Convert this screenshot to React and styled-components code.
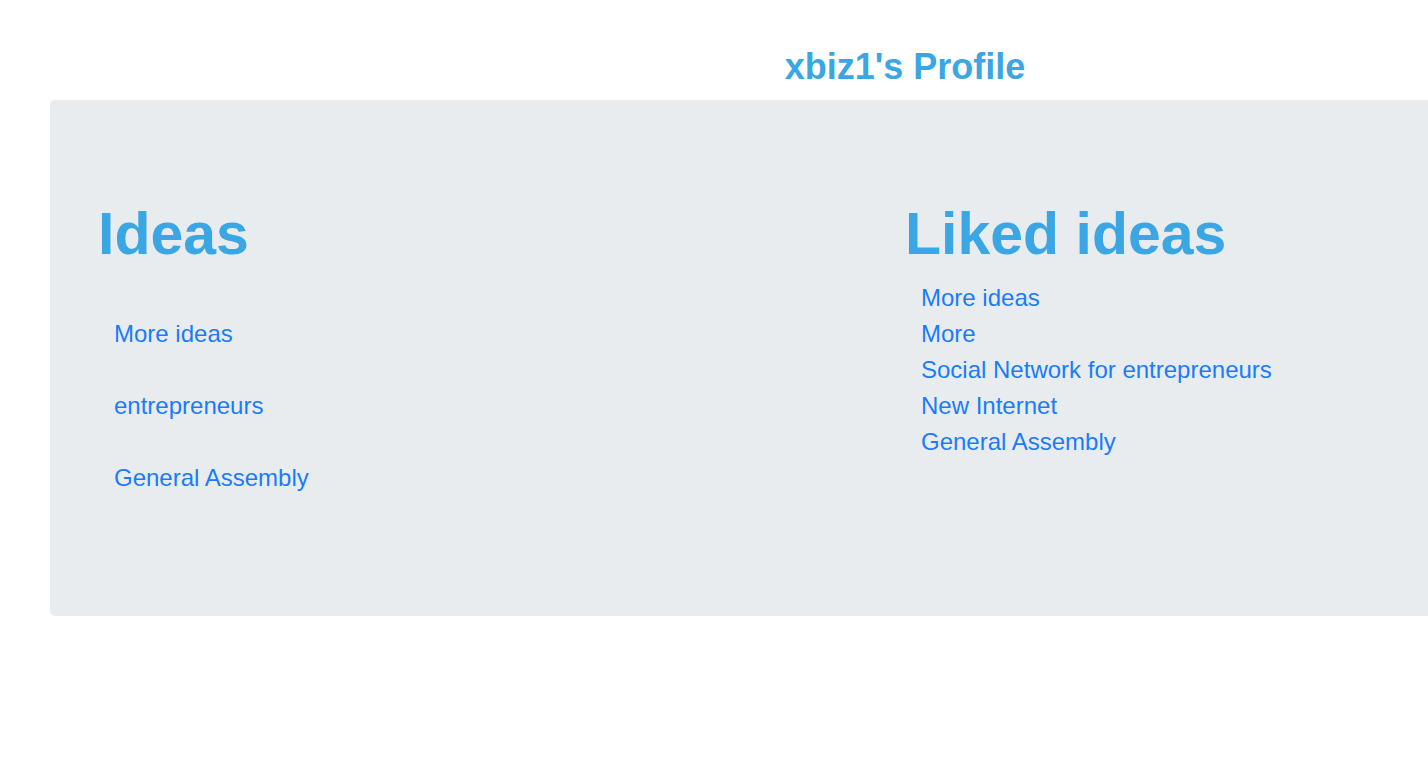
import React from 'react';
import styled, {createGlobalStyle} from "styled-components";

const GlobalStyle = createGlobalStyle`
  html { font-size: 24px; }
  body {
    margin: 0;
    overflow: hidden;
    background: #fff;
    font-family: "Helvetica Neue", "Liberation Sans", Arial, sans-serif;
    line-height: 1.5;
    color: #212529;
  }
`;

// page is wider than the window, like the original
const StyledPage = styled.div`
  width: 1810px;
  padding-top: 45px;
`;

const ProfileTitle = styled.h4`
  margin: 0 0 12px;
  text-align: center;
  font-size: 1.5rem;
  font-weight: 700;
  line-height: 1.2;
  color: #3ba6e4;
`;

const Jumbotron = styled.div`
  margin: 0 50px;
  padding: 96px 48px;
  background: #e9ecef;
  border-radius: 5px;
  display: grid;
  grid-template-columns: 1fr 1fr;
`;

const Column = styled.section`
  min-width: 0;
`;

const Heading = styled.h1`
  margin: 0 0 12px;
  padding-top: 2px;
  height: 70px;
  font-size: 59px;
  font-weight: 700;
  line-height: 72px;
  color: #3ba6e4;
`;

const IdeaList = styled.ul`
  list-style: none;
  margin: 0 0 24px;
  padding: 0 0 0 16px;
`;

const IdeaItem = styled.li`
  padding-top: ${({spaced}) => (spaced ? '36px' : '0')};
  line-height: 36px;
`;

const IdeaLink = styled.a`
  color: #1a7cf9;
  text-decoration: none;
  font-size: 1rem;
`;

const ideas = ['More ideas', 'entrepreneurs', 'General Assembly'];
const liked = ['More ideas', 'More', 'Social Network for entrepreneurs', 'New Internet', 'General Assembly'];

const App = () => {
    return (
        <StyledPage>
            <GlobalStyle/>
            <ProfileTitle>xbiz1's Profile</ProfileTitle>
            <Jumbotron>
                <Column>
                    <Heading>Ideas</Heading>
                    <IdeaList>
                        {ideas.map((title, i) => (
                            <IdeaItem spaced key={i}><IdeaLink href="#">{title}</IdeaLink></IdeaItem>
                        ))}
                    </IdeaList>
                </Column>
                <Column>
                    <Heading>Liked ideas</Heading>
                    <IdeaList>
                        {liked.map((title, i) => (
                            <IdeaItem key={i}><IdeaLink href="#">{title}</IdeaLink></IdeaItem>
                        ))}
                    </IdeaList>
                </Column>
            </Jumbotron>
        </StyledPage>
    );
};

export default App;
